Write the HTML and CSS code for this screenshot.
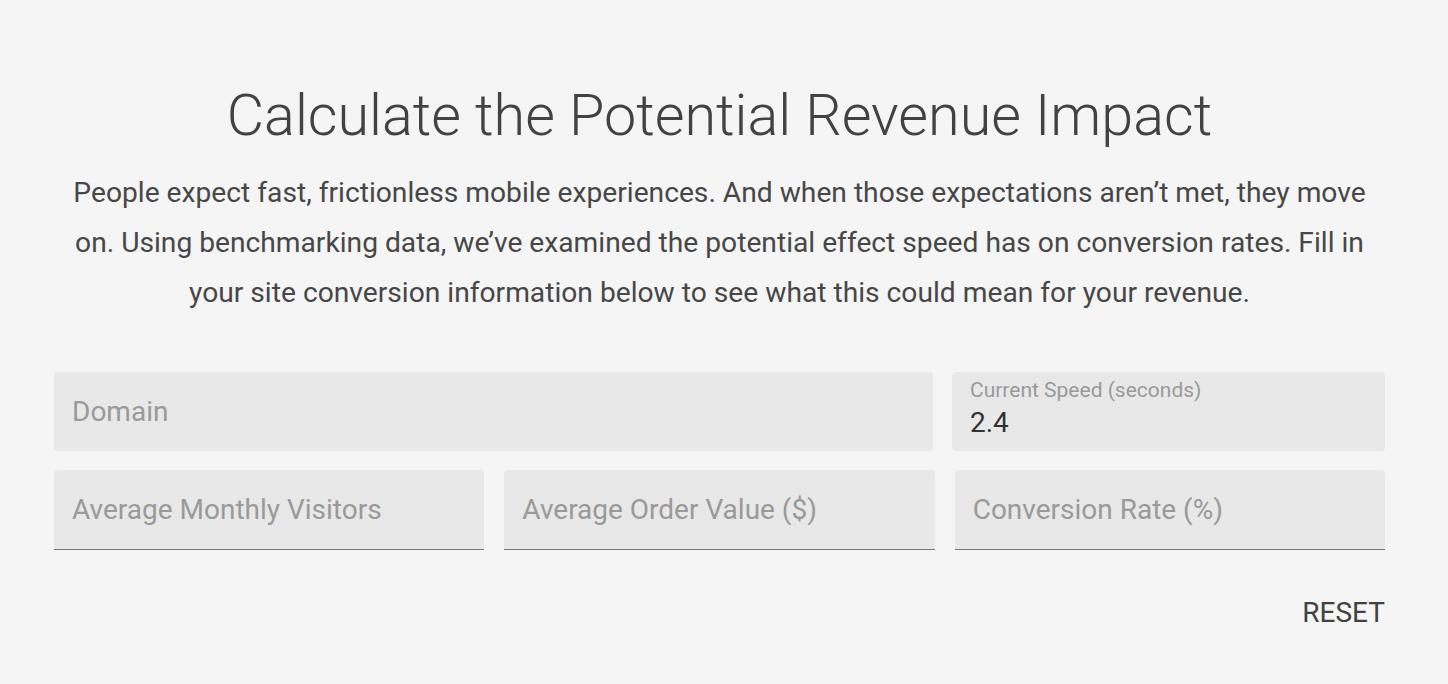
FILE: index.html
```html
<!DOCTYPE html>
<html lang="en">
<head>
  <meta charset="UTF-8">
  <title>Revenue Impact Calculator</title>
  <link rel="stylesheet" href="styles.css">
</head>
<body>
<main class="calc">
  <h1 class="calc-title">Calculate the Potential Revenue Impact</h1>
  <p class="calc-intro">People expect fast, frictionless mobile experiences. And when those expectations aren’t met, they move on. Using benchmarking data, we’ve examined the potential effect speed has on conversion rates. Fill in your site conversion information below to see what this could mean for your revenue.</p>

  <form class="calc-form">
    <div class="row row-top">
      <div class="field">
        <input type="text" placeholder="Domain">
      </div>
      <div class="field field-labelled">
        <label for="speed">Current Speed (seconds)</label>
        <input type="text" id="speed" value="2.4">
      </div>
    </div>
    <div class="row row-bottom">
      <div class="field field-line">
        <input type="text" placeholder="Average Monthly Visitors">
      </div>
      <div class="field field-line">
        <input type="text" placeholder="Average Order Value ($)">
      </div>
      <div class="field field-line">
        <input type="text" placeholder="Conversion Rate (%)">
      </div>
    </div>
    <div class="actions">
      <button type="reset" class="btn-reset">RESET</button>
    </div>
  </form>
</main>
</body>
</html>
```

FILE: styles.css
```css
* {
  margin: 0;
  padding: 0;
  box-sizing: border-box;
}

body {
  background: #f5f5f5;
  font-family: Roboto, "Liberation Sans", sans-serif;
  color: #424242;
}

.calc {
  width: 1331px;
  margin-left: 54px;
  padding-top: 81px;
}

.calc-title {
  font-size: 57.5px;
  font-weight: 300;
  line-height: 70px;
  text-align: center;
  color: #424242;
}

.calc-intro {
  width: 1305px;
  margin: 17px auto 0;
  font-size: 28.2px;
  line-height: 50px;
  text-align: center;
  color: #474747;
}

.calc-form {
  margin-top: 54px;
}

.row {
  display: grid;
  margin-bottom: 19px;
}

.row-top {
  grid-template-columns: 879px 1fr;
  column-gap: 19px;
}

.row-bottom {
  grid-template-columns: 1fr 1fr 1fr;
  column-gap: 20px;
}

.field {
  height: 79px;
  background: #e8e8e8;
  border-radius: 4px;
  padding: 0 18px;
  display: flex;
  flex-direction: column;
  justify-content: center;
}

.field-line {
  height: 80px;
  border-radius: 4px 4px 0 0;
  border-bottom: 1px solid #777;
}

.field input {
  width: 100%;
  border: 0;
  outline: 0;
  background: transparent;
  font-family: Roboto, "Liberation Sans", sans-serif;
  font-size: 28px;
  color: #333;
}

.field input::placeholder {
  color: #9a9a9a;
}

.field-labelled {
  justify-content: flex-start;
  padding-top: 5px;
}

.field-labelled label {
  font-size: 21px;
  line-height: 26px;
  color: #9a9a9a;
}

.field-labelled input {
  line-height: 40px;
}

.actions {
  display: flex;
  justify-content: flex-end;
  margin-top: 46px;
}

.btn-reset {
  border: 0;
  background: transparent;
  font-family: Roboto, "Liberation Sans", sans-serif;
  font-size: 28px;
  color: #424242;
  cursor: pointer;
}
```
